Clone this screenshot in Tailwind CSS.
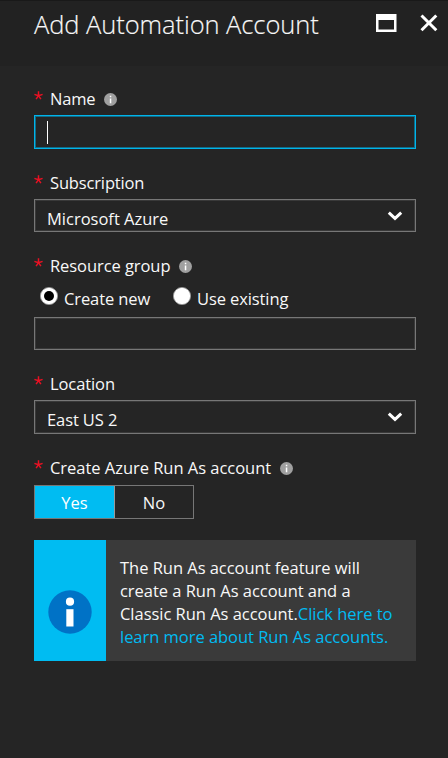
<!DOCTYPE html>
<html lang="en">
<head>
<meta charset="utf-8">
<title>Add Automation Account</title>
<script src="https://cdn.jsdelivr.net/npm/@tailwindcss/browser@4"></script>
</head>
<body class="h-[758px] w-[448px] overflow-hidden bg-[#252525] font-['Open_Sans','Noto_Sans',sans-serif] text-[16.5px] leading-5 text-[#f8f8f8]">
<svg class="hidden">
  <symbol id="info" viewBox="0 0 13 13"><circle cx="6.5" cy="6.5" r="6.5" fill="#a0a0a0"/><path d="M5.8 2.8h1.5v1.5H5.8zM5.8 5.4h1.5v4.8H5.8z" fill="#fff"/></symbol>
  <symbol id="star" viewBox="0 0 9 9"><path d="M4.5 4.7V.3M4.5 4.7L.4 3.4M4.5 4.7L8.6 3.4M4.5 4.7L2.1 8.2M4.5 4.7L6.9 8.2" stroke="#e81123" stroke-width="1.5"/></symbol>
  <symbol id="chevron" viewBox="0 0 16 10"><path d="M1.8 1.6L8 7.4L14.2 1.6" fill="none" stroke="#fff" stroke-width="3"/></symbol>
</svg>
<header class="flex h-[66px] items-start border-t border-[#191919] bg-[#222222] pl-[34px]">
  <h1 class="mt-[5px] w-[342px] whitespace-nowrap text-[25.5px] font-light leading-[36px] tracking-[-0.07px] [-webkit-text-stroke:0.15px_#f8f8f8]">Add Automation Account</h1>
  <svg class="mt-[13px] h-[19px] w-[21px] shrink-0" viewBox="0 0 21 19"><path fill="#fff" fill-rule="evenodd" d="M0 0H20.5V18H0zM2.5 6V15.5H18V6z"/></svg>
  <svg class="ml-[23px] mt-[13px] h-[18px] w-[18px] shrink-0" viewBox="0 0 18 18"><path d="M1.5 1.5L16.3 16.3M16.3 1.5L1.5 16.3" stroke="#fff" stroke-width="3"/></svg>
</header>
<main class="flex w-[416px] flex-col pl-[34px] pt-[23px]">
  <div class="flex h-5 items-center whitespace-nowrap">
    <svg class="mb-[8px] mr-[7px] size-[9px]"><use href="#star"/></svg><label class="tracking-[-0.2px]">Name</label><svg class="ml-[9px] size-[13px]"><use href="#info"/></svg>
  </div>
  <div class="mt-[6px] flex h-[34px] items-center border border-[#00b4ea] pl-[12px] shadow-[inset_0_0_0_1px_#00b4ea80]"><span class="h-[23px] w-px bg-white"></span></div>

  <div class="mt-6 flex h-5 items-center whitespace-nowrap">
    <svg class="mb-[8px] mr-[7px] size-[9px]"><use href="#star"/></svg><label class="tracking-[-0.15px]">Subscription</label>
  </div>
  <div class="mt-[6px] flex h-[33px] items-center justify-between border border-[#777] pl-3 pr-[12px] shadow-[inset_0_0_0_1px_#77777740]"><span class="mt-[6px]">Microsoft Azure</span><svg class="h-[10px] w-4"><use href="#chevron"/></svg></div>

  <div class="mt-6 flex h-5 items-center whitespace-nowrap">
    <svg class="mb-[8px] mr-[7px] size-[9px]"><use href="#star"/></svg><label class="tracking-[-0.07px]">Resource group</label><svg class="ml-[9px] size-[13px]"><use href="#info"/></svg>
  </div>
  <div class="mt-[10px] flex h-5 items-center whitespace-nowrap pl-[6px]">
    <svg class="size-[18px] shrink-0" viewBox="0 0 18 18"><circle cx="9" cy="9" r="8.6" fill="#fff" stroke="#999" stroke-width=".8"/><circle cx="9" cy="9" r="5" fill="#000"/></svg>
    <span class="ml-[6px] mt-[6px] w-[109px] tracking-[-0.1px]">Create new</span>
    <svg class="size-[18px] shrink-0" viewBox="0 0 18 18"><circle cx="9" cy="9" r="8.6" fill="#fff" stroke="#999" stroke-width=".8"/></svg>
    <span class="ml-[6px] mt-[6px] tracking-[-0.1px]">Use existing</span>
  </div>
  <div class="mt-[11px] h-[33px] border border-[#777] shadow-[inset_0_0_0_1px_#77777740]"></div>

  <div class="mt-6 flex h-5 items-center whitespace-nowrap">
    <svg class="mb-[8px] mr-[7px] size-[9px]"><use href="#star"/></svg><label class="tracking-[-0.1px]">Location</label>
  </div>
  <div class="mt-[6px] flex h-[34px] items-center justify-between border border-[#777] pl-3 pr-[12px] shadow-[inset_0_0_0_1px_#77777740]"><span class="mt-[6px] tracking-[-0.1px]">East US 2</span><svg class="h-[10px] w-4"><use href="#chevron"/></svg></div>

  <div class="mt-6 flex h-5 items-center whitespace-nowrap">
    <svg class="mb-[8px] mr-[7px] size-[9px]"><use href="#star"/></svg><label class="tracking-[-0.03px]">Create Azure Run As account</label><svg class="ml-[9px] size-[13px]"><use href="#info"/></svg>
  </div>
  <div class="mt-[7px] flex h-[34px] w-[160px] border border-[#777] text-center leading-[34px]">
    <div class="w-[80px] border-r border-[#999] bg-[#00bcf2] text-white">Yes</div><div class="w-[78px]">No</div>
  </div>

  <div class="mt-[21px] flex h-[121px] bg-[#3a3a3a]">
    <div class="flex w-[72px] shrink-0 items-center justify-center bg-[#00bcf2] pt-[23px]">
      <svg class="size-[44px]" viewBox="0 0 44 44"><circle cx="22" cy="22" r="21.7" fill="#0072c6"/><circle cx="22" cy="11.7" r="4.1" fill="#fff"/><path d="M18.3 19.2h7.2v17.3h-7.2z" fill="#fff"/></svg>
    </div>
    <p class="whitespace-nowrap pl-[14px] pt-[16px] leading-[23px] tracking-[-0.03px]">The Run As account feature will<br>create a Run As account and a<br>Classic Run As account.<a class="text-[#00bcf2]">Click here to<br>learn more about Run As accounts.</a></p>
  </div>
</main>
</body>
</html>
